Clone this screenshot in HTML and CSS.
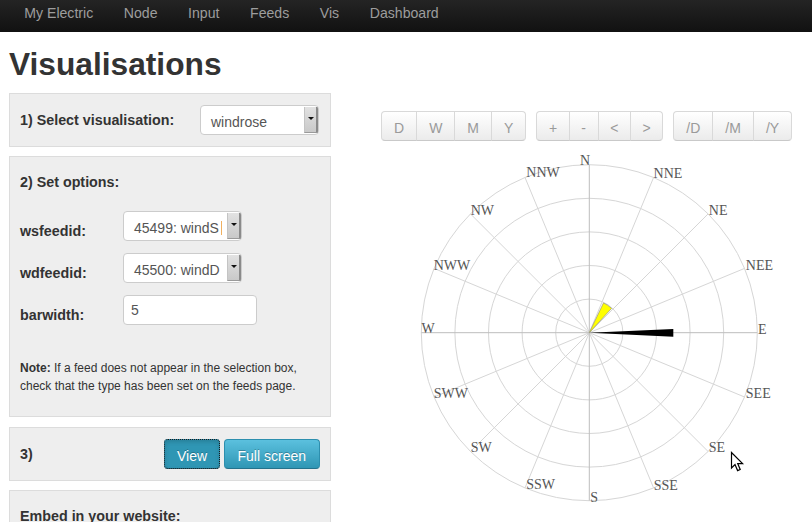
FILE: index.html
```html
<!DOCTYPE html>
<html>
<head>
<meta charset="utf-8">
<title>Visualisations</title>
<link rel="stylesheet" href="styles.css">
</head>
<body>
<div class="navbar">
  <ul class="nav">
    <li>My Electric</li>
    <li>Node</li>
    <li>Input</li>
    <li>Feeds</li>
    <li>Vis</li>
    <li>Dashboard</li>
  </ul>
</div>
<div class="container">
  <h2 class="title">Visualisations</h2>
  <div class="row">
    <div class="sidebar">
      <div class="well well-row well-first">
        <span class="lbl">1) Select visualisation:</span>
        <div class="select sel-vis"><span class="sel-text">windrose</span><span class="sel-arrow"></span></div>
      </div>
      <div class="well well-opts">
        <div class="heading">2) Set options:</div>
        <div class="opt-rows">
          <div class="opt-row">
            <span class="opt-label">wsfeedid:</span>
            <div class="select sel-feed"><span class="sel-text">45499: windS</span><span class="sel-caret"></span><span class="sel-arrow"></span></div>
          </div>
          <div class="opt-row">
            <span class="opt-label">wdfeedid:</span>
            <div class="select sel-feed"><span class="sel-text">45500: windD</span><span class="sel-arrow"></span></div>
          </div>
          <div class="opt-row">
            <span class="opt-label">barwidth:</span>
            <div class="input">5</div>
          </div>
        </div>
        <p class="note"><b>Note:</b> If a feed does not appear in the selection box, check that the type has been set on the feeds page.</p>
      </div>
      <div class="well well-row well-step3">
        <span class="lbl">3)</span>
        <div class="btns">
          <button class="btn btn-view">View</button>
          <button class="btn btn-full">Full screen</button>
        </div>
      </div>
      <div class="well well-embed">
        <div class="heading">Embed in your website:</div>
      </div>
    </div>
    <div class="main">
      <div class="toolbar">
        <div class="tb-group">
          <span class="tb-btn">D</span><span class="tb-btn">W</span><span class="tb-btn">M</span><span class="tb-btn">Y</span>
        </div>
        <div class="tb-group">
          <span class="tb-btn tb-narrow">+</span><span class="tb-btn tb-narrow">-</span><span class="tb-btn tb-narrow">&lt;</span><span class="tb-btn tb-narrow">&gt;</span>
        </div>
        <div class="tb-group">
          <span class="tb-btn">/D</span><span class="tb-btn">/M</span><span class="tb-btn">/Y</span>
        </div>
      </div>
      <svg class="rose" width="416" height="372" viewBox="0 0 416 372">
        <g transform="translate(208.3 182.7)">
          <g class="rings">
            <circle r="168"/>
            <circle r="134.4"/>
            <circle r="100.8"/>
            <circle r="67.2"/>
            <circle r="33.6"/>
          </g>
          <g class="spokes">
            <line x1="0" y1="0" x2="64.29" y2="-155.21"/>
            <line x1="0" y1="0" x2="118.79" y2="-118.79"/>
            <line x1="0" y1="0" x2="155.21" y2="-64.29"/>
            <line x1="0" y1="0" x2="155.21" y2="64.29"/>
            <line x1="0" y1="0" x2="118.79" y2="118.79"/>
            <line x1="0" y1="0" x2="64.29" y2="155.21"/>
            <line x1="0" y1="0" x2="-64.29" y2="155.21"/>
            <line x1="0" y1="0" x2="-118.79" y2="118.79"/>
            <line x1="0" y1="0" x2="-155.21" y2="64.29"/>
            <line x1="0" y1="0" x2="-155.21" y2="-64.29"/>
            <line x1="0" y1="0" x2="-118.79" y2="-118.79"/>
            <line x1="0" y1="0" x2="-64.29" y2="-155.21"/>
          </g>
          <g class="axes">
            <line x1="0" y1="-168" x2="0" y2="168"/>
            <line x1="-168" y1="0" x2="168" y2="0"/>
          </g>
          <path class="bar-yellow" d="M0 0 L14.21 -29.78 A33 33 0 0 1 22.29 -24.33 Z"/>
          <path class="bar-black" d="M0 0 L84 -3.7 L84 4.1 Z"/>
          <g class="labels">
            <text x="-9.4" y="-167.7">N</text>
            <text x="64.3" y="-154.5">NNE</text>
            <text x="119.5" y="-117.8">NE</text>
            <text x="156.5" y="-62.8">NEE</text>
            <text x="168.6" y="1.2">E</text>
            <text x="156.5" y="65.6">SEE</text>
            <text x="119.5" y="119.8">SE</text>
            <text x="64.5" y="157.3">SSE</text>
            <text x="1" y="169">S</text>
            <text x="-63" y="156.6">SSW</text>
            <text x="-118.6" y="119.5">SW</text>
            <text x="-155.6" y="65">SWW</text>
            <text x="-167.8" y="0.4">W</text>
            <text x="-155.6" y="-62.7">NWW</text>
            <text x="-118.6" y="-117.7">NW</text>
            <text x="-63" y="-155.4">NNW</text>
          </g>
        </g>
      </svg>
    </div>
  </div>
</div>
<svg class="cursor" width="15" height="22" viewBox="0 0 15 22">
  <path d="M1.5 1.5 L1.5 17 L5 13.6 L7.6 19.6 L10.2 18.5 L7.7 12.6 L12.6 12.6 Z"/>
</svg>
</body>
</html>
```

FILE: styles.css
```css
* {
  box-sizing: border-box;
}

html,
body {
  margin: 0;
  padding: 0;
}

body {
  position: relative;
  width: 812px;
  height: 522px;
  overflow: hidden;
  background: #ffffff;
  color: #333333;
  font-family: "Liberation Sans", Arial, sans-serif;
  font-size: 14px;
  line-height: 20px;
}

/* ---------- navbar ---------- */
.navbar {
  height: 32px;
  background: linear-gradient(#242424, #111111);
}

.nav {
  display: flex;
  margin: 0;
  padding: 0 0 0 9px;
  list-style: none;
}

.nav li {
  padding: 3px 15.3px 9px;
  color: #9d9d9d;
  font-size: 14.1px;
  line-height: 20px;
}

/* ---------- layout ---------- */
.container {
  padding-left: 9px;
}

.title {
  margin: 12px 0 9px;
  font-size: 31.7px;
  line-height: 40px;
  font-weight: bold;
  color: #333333;
}

.row {
  display: flex;
  align-items: flex-start;
}

.sidebar {
  flex: none;
  width: 322px;
}

.main {
  flex: none;
  margin-left: 50px;
  padding-top: 18px;
}

/* ---------- wells ---------- */
.well {
  background: #eeeeee;
  border: 1px solid #dcdcdc;
  margin-bottom: 9px;
}

.well-row {
  display: flex;
  justify-content: space-between;
  align-items: center;
  height: 54px;
  padding: 0 11px 0 10px;
}

.well-step3 {
  padding-right: 10px;
}

.lbl {
  font-weight: bold;
  font-size: 14.3px;
  margin-bottom: 1px;
}

.heading {
  font-weight: bold;
  font-size: 14.3px;
}

.well-opts {
  height: 261px;
  padding: 15px 10px 0 10px;
  margin-bottom: 10px;
}

.well-embed {
  height: 60px;
  padding: 15px 10px 0 10px;
}

.opt-rows {
  display: flex;
  flex-direction: column;
  gap: 12px;
  margin-top: 19px;
}

.opt-row {
  display: flex;
  align-items: flex-end;
  height: 30px;
}

.opt-label {
  flex: none;
  width: 103px;
  font-weight: bold;
  font-size: 14.3px;
}

.note {
  margin: 34px 0 0;
  font-size: 12px;
  line-height: 18px;
}

/* ---------- form controls ---------- */
.select {
  display: flex;
  height: 30px;
  background: #ffffff;
  border: 1px solid #cccccc;
  border-radius: 4px;
  overflow: hidden;
  color: #555555;
}

.sel-vis {
  width: 119px;
}

.sel-feed {
  width: 119px;
}

.sel-text {
  flex: 1;
  min-width: 0;
  padding: 6px 0 0 10px;
  white-space: nowrap;
  overflow: hidden;
}

.sel-caret {
  flex: none;
  width: 1px;
  height: 14px;
  margin: 9px 5px 0 0;
  background: #f0b060;
}

.sel-arrow {
  position: relative;
  flex: none;
  width: 14px;
  margin: 1px 0 1px 0;
  background: linear-gradient(#e2e2e2, #c9c9c9);
  border-left: 1px solid #c4c4c4;
  border-right: 2px solid #8a8a8a;
  border-bottom: 1px solid #9a9a9a;
}

.sel-arrow::after {
  content: "";
  position: absolute;
  left: 3px;
  top: 10px;
  border-left: 3px solid transparent;
  border-right: 3px solid transparent;
  border-top: 3px solid #111111;
}

.input {
  width: 134px;
  height: 30px;
  padding: 4px 7px;
  background: #ffffff;
  border: 1px solid #cccccc;
  border-radius: 4px;
  color: #555555;
}

/* ---------- buttons ---------- */
.btns {
  display: flex;
  gap: 4px;
}

.btn {
  height: 30px;
  padding: 6px 12px 2px;
  font-family: inherit;
  font-size: 14px;
  line-height: 20px;
  color: #ffffff;
  text-shadow: 0 -1px 0 rgba(0, 0, 0, 0.25);
  border: 1px solid #2d8fae;
  border-bottom-color: #24728c;
  border-radius: 4px;
  background: linear-gradient(#5bc0de, #2f96b4);
}

.btn-view {
  padding: 6px 11.5px 2px;
  background: #2f96b4;
  box-shadow: inset 0 2px 4px rgba(0, 0, 0, 0.15);
  outline: 1px dotted #1a1a1a;
  outline-offset: -1px;
}

.btn-full {
  padding: 6px 13px 2px;
}

/* ---------- toolbar ---------- */
.toolbar {
  display: flex;
  gap: 10px;
}

.tb-group {
  display: flex;
}

.tb-btn {
  height: 30px;
  padding: 6px 12px 2px;
  line-height: 20px;
  color: #9a9a9a;
  background: linear-gradient(#ffffff, #ebebeb);
  border: 1px solid #d9d9d9;
  border-bottom-color: #c9c9c9;
  margin-left: -1px;
}

.tb-btn:first-child {
  margin-left: 0;
  border-radius: 4px 0 0 4px;
}

.tb-btn:last-child {
  border-radius: 0 4px 4px 0;
}

.tb-btn.tb-narrow {
  padding: 6px 11.6px 2px;
}

/* ---------- windrose ---------- */
.rose {
  display: block;
  margin-top: 9px;
}

.rings circle {
  fill: none;
  stroke: #d6d6d6;
  stroke-width: 1;
}

.spokes line {
  stroke: #d6d6d6;
  stroke-width: 1;
}

.axes line {
  stroke: #bdbdbd;
  stroke-width: 1;
}

.bar-yellow {
  fill: #ffff00;
  stroke: #8a8a6a;
  stroke-width: 0.6;
}

.bar-black {
  fill: #000000;
}

.labels text {
  font-family: "Liberation Serif", "Times New Roman", serif;
  font-size: 14px;
  fill: #555555;
}

/* ---------- mouse pointer ---------- */
.cursor {
  position: absolute;
  left: 730px;
  top: 451px;
}

.cursor path {
  fill: #ffffff;
  stroke: #000000;
  stroke-width: 1.2;
  stroke-linejoin: miter;
}
```
